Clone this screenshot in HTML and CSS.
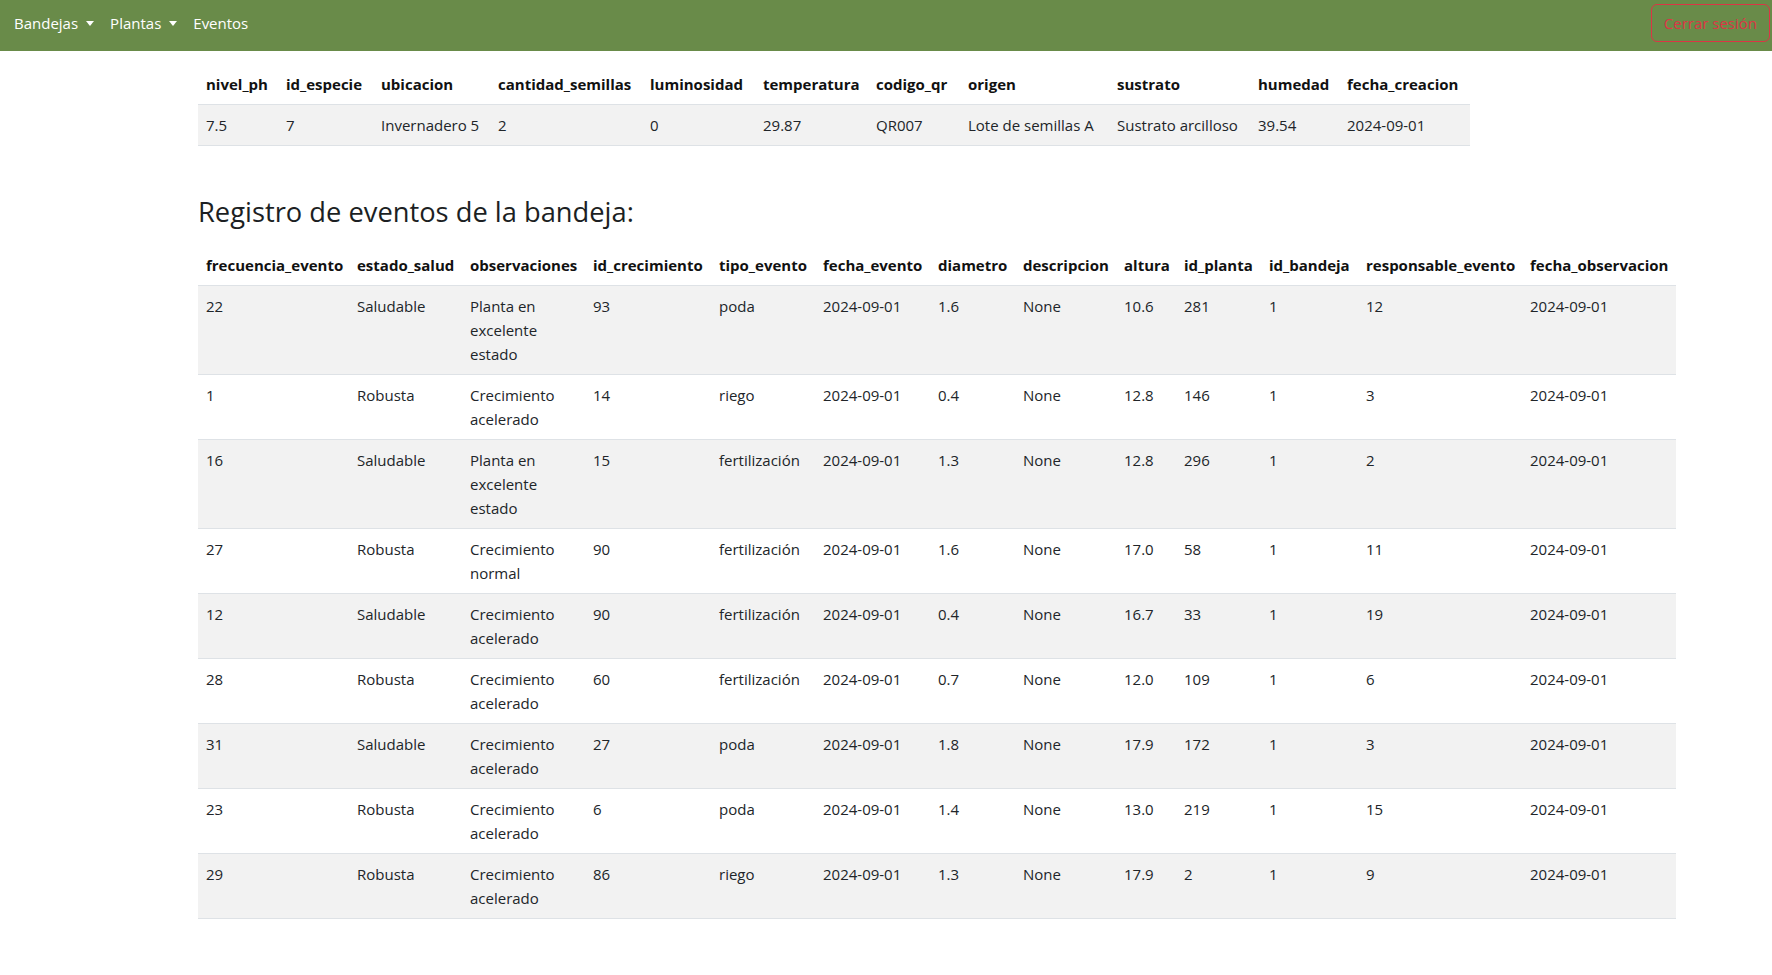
FILE: index.html
```html
<!DOCTYPE html>
<html lang="es">
<head>
<meta charset="utf-8">
<title>Bandeja</title>
<link rel="stylesheet" href="styles.css">
</head>
<body>
<nav class="navbar">
  <ul class="nav-list">
    <li><a class="nav-link" href="#">Bandejas<span class="caret"></span></a></li>
    <li><a class="nav-link" href="#">Plantas<span class="caret"></span></a></li>
    <li><a class="nav-link" href="#">Eventos</a></li>
  </ul>
  <button class="btn-logout" type="button">Cerrar sesión</button>
</nav>

<main class="container">
  <table class="table table-tray">
    <colgroup>
      <col><col><col><col><col><col><col><col><col><col><col>
    </colgroup>
    <thead>
      <tr>
        <th>nivel_ph</th><th>id_especie</th><th>ubicacion</th><th>cantidad_semillas</th><th>luminosidad</th><th>temperatura</th><th>codigo_qr</th><th>origen</th><th>sustrato</th><th>humedad</th><th>fecha_creacion</th>
      </tr>
    </thead>
    <tbody>
      <tr>
        <td>7.5</td><td>7</td><td>Invernadero 5</td><td>2</td><td>0</td><td>29.87</td><td>QR007</td><td>Lote de semillas A</td><td>Sustrato arcilloso</td><td>39.54</td><td>2024-09-01</td>
      </tr>
    </tbody>
  </table>

  <h3 class="section-title">Registro de eventos de la bandeja:</h3>

  <table class="table table-events">
    <colgroup>
      <col><col><col><col><col><col><col><col><col><col><col><col><col>
    </colgroup>
    <thead>
      <tr>
        <th>frecuencia_evento</th><th>estado_salud</th><th>observaciones</th><th>id_crecimiento</th><th>tipo_evento</th><th>fecha_evento</th><th>diametro</th><th>descripcion</th><th>altura</th><th>id_planta</th><th>id_bandeja</th><th>responsable_evento</th><th>fecha_observacion</th>
      </tr>
    </thead>
    <tbody>
      <tr><td>22</td><td>Saludable</td><td>Planta en excelente estado</td><td>93</td><td>poda</td><td>2024-09-01</td><td>1.6</td><td>None</td><td>10.6</td><td>281</td><td>1</td><td>12</td><td>2024-09-01</td></tr>
      <tr><td>1</td><td>Robusta</td><td>Crecimiento acelerado</td><td>14</td><td>riego</td><td>2024-09-01</td><td>0.4</td><td>None</td><td>12.8</td><td>146</td><td>1</td><td>3</td><td>2024-09-01</td></tr>
      <tr><td>16</td><td>Saludable</td><td>Planta en excelente estado</td><td>15</td><td>fertilización</td><td>2024-09-01</td><td>1.3</td><td>None</td><td>12.8</td><td>296</td><td>1</td><td>2</td><td>2024-09-01</td></tr>
      <tr><td>27</td><td>Robusta</td><td>Crecimiento normal</td><td>90</td><td>fertilización</td><td>2024-09-01</td><td>1.6</td><td>None</td><td>17.0</td><td>58</td><td>1</td><td>11</td><td>2024-09-01</td></tr>
      <tr><td>12</td><td>Saludable</td><td>Crecimiento acelerado</td><td>90</td><td>fertilización</td><td>2024-09-01</td><td>0.4</td><td>None</td><td>16.7</td><td>33</td><td>1</td><td>19</td><td>2024-09-01</td></tr>
      <tr><td>28</td><td>Robusta</td><td>Crecimiento acelerado</td><td>60</td><td>fertilización</td><td>2024-09-01</td><td>0.7</td><td>None</td><td>12.0</td><td>109</td><td>1</td><td>6</td><td>2024-09-01</td></tr>
      <tr><td>31</td><td>Saludable</td><td>Crecimiento acelerado</td><td>27</td><td>poda</td><td>2024-09-01</td><td>1.8</td><td>None</td><td>17.9</td><td>172</td><td>1</td><td>3</td><td>2024-09-01</td></tr>
      <tr><td>23</td><td>Robusta</td><td>Crecimiento acelerado</td><td>6</td><td>poda</td><td>2024-09-01</td><td>1.4</td><td>None</td><td>13.0</td><td>219</td><td>1</td><td>15</td><td>2024-09-01</td></tr>
      <tr><td>29</td><td>Robusta</td><td>Crecimiento acelerado</td><td>86</td><td>riego</td><td>2024-09-01</td><td>1.3</td><td>None</td><td>17.9</td><td>2</td><td>1</td><td>9</td><td>2024-09-01</td></tr>
    </tbody>
  </table>
</main>
</body>
</html>
```

FILE: styles.css
```css
html, body {
  margin: 0;
  padding: 0;
  background: #fff;
}

body {
  font-family: "Open Sans", "Segoe UI", "Noto Sans", sans-serif;
  font-size: 15px;
  line-height: 24px;
  color: #212529;
}

/* ---------- navbar ---------- */
.navbar {
  display: flex;
  justify-content: space-between;
  align-items: flex-start;
  height: 51px;
  box-sizing: border-box;
  padding: 3px 2px 0 6px;
  background: #698b49;
}

.nav-list {
  display: flex;
  list-style: none;
  margin: 0;
  padding: 0;
}

.nav-link {
  display: block;
  padding: 8px;
  color: #fff;
  text-decoration: none;
}

.caret {
  display: inline-block;
  margin-left: 8px;
  vertical-align: 3px;
  border-top: 5px solid #fff;
  border-left: 4.5px solid transparent;
  border-right: 4.5px solid transparent;
}

.btn-logout {
  margin-top: 1px;
  padding: 6px 12px;
  font: inherit;
  line-height: 24px;
  color: #dc3545;
  background: transparent;
  border: 1px solid #dc3545;
  border-radius: 6px;
}

/* ---------- content ---------- */
.container {
  max-width: 1400px;
  margin: 0 auto;
  padding: 13px 12px 0;
  box-sizing: border-box;
}

.table {
  border-collapse: collapse;
  table-layout: fixed;
}

.table th,
.table td {
  padding: 8px;
  text-align: left;
  vertical-align: top;
  border-bottom: 1px solid #dee2e6;
}

.table th {
  font-weight: 700;
  color: #111;
  white-space: nowrap;
}

.table tbody tr:nth-child(odd) td {
  background: #f2f2f2;
}

.table-tray {
  width: 1272px;
}

.table-tray td {
  white-space: nowrap;
}

.table-tray col:nth-child(1) { width: 80px; }
.table-tray col:nth-child(2) { width: 95px; }
.table-tray col:nth-child(3) { width: 117px; }
.table-tray col:nth-child(4) { width: 152px; }
.table-tray col:nth-child(5) { width: 113px; }
.table-tray col:nth-child(6) { width: 113px; }
.table-tray col:nth-child(7) { width: 92px; }
.table-tray col:nth-child(8) { width: 149px; }
.table-tray col:nth-child(9) { width: 141px; }
.table-tray col:nth-child(10) { width: 89px; }
.table-tray col:nth-child(11) { width: 131px; }

.section-title {
  margin: 50px 0 16px;
  font-size: 27.3px;
  font-weight: 500;
  line-height: 1.2;
  color: #1c1f23;
}

.table-events {
  width: 1478px;
}

.table-events col:nth-child(1) { width: 151px; }
.table-events col:nth-child(2) { width: 113px; }
.table-events col:nth-child(3) { width: 123px; }
.table-events col:nth-child(4) { width: 126px; }
.table-events col:nth-child(5) { width: 104px; }
.table-events col:nth-child(6) { width: 115px; }
.table-events col:nth-child(7) { width: 85px; }
.table-events col:nth-child(8) { width: 101px; }
.table-events col:nth-child(9) { width: 60px; }
.table-events col:nth-child(10) { width: 85px; }
.table-events col:nth-child(11) { width: 97px; }
.table-events col:nth-child(12) { width: 164px; }
.table-events col:nth-child(13) { width: 154px; }
```
